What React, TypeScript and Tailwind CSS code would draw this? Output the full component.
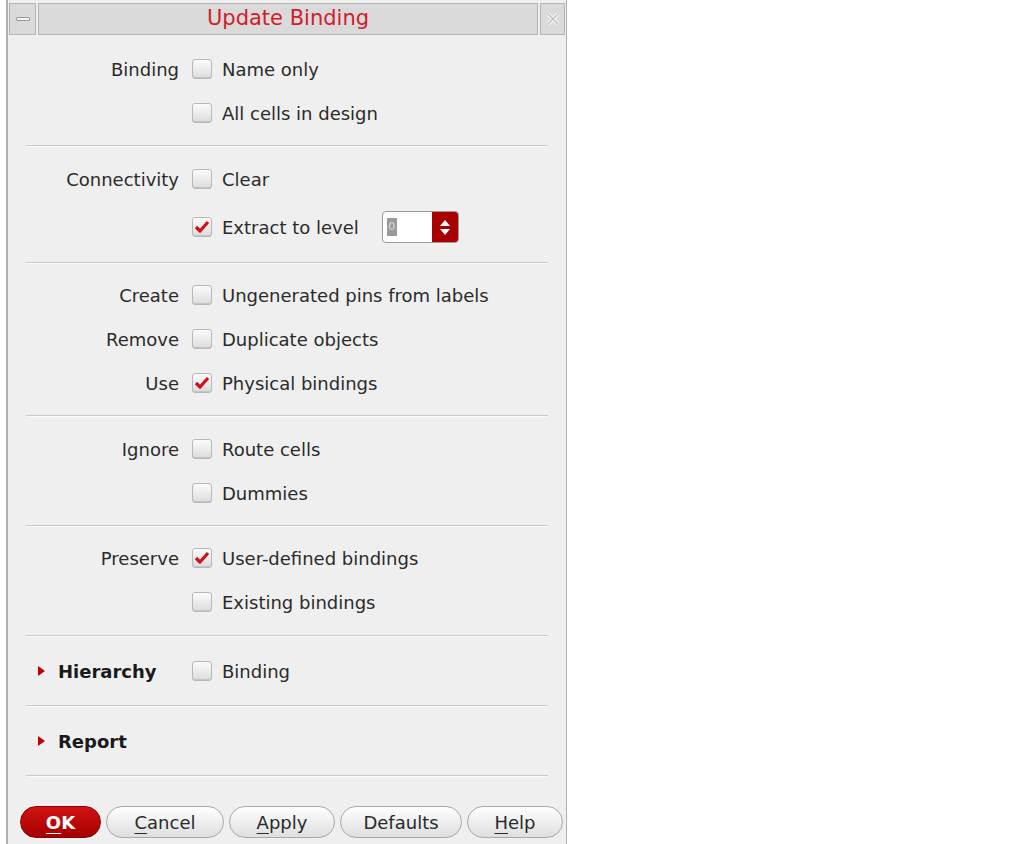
import React from "react";

const font = { fontFamily: '"DejaVu Sans", "Noto Sans", sans-serif' };

function Check({ checked }: { checked?: boolean }) {
  return (
    <span className="relative flex h-[20px] w-[20px] shrink-0 items-center justify-center rounded-[3px] border border-[#b8b8b8] bg-gradient-to-b from-[#fbfbfb] to-[#dcdcdc] shadow-[inset_0_-1px_0_#c4c4c4]">
      {checked && (
        <svg width="16" height="14" viewBox="0 0 16 14">
          <path d="M2 7 L6 11 L14 2" stroke="#d0111b" strokeWidth="3.2" fill="none" strokeLinejoin="round" />
        </svg>
      )}
    </span>
  );
}

function Row({ label, text, checked }: { label?: string; text: string; checked?: boolean }) {
  return (
    <div className="flex h-[44px] items-center">
      <div className="w-[184px] pr-[13px] text-right">{label}</div>
      <Check checked={checked} />
      <span className="ml-[10px]">{text}</span>
    </div>
  );
}

function Sep() {
  return <div className="mx-[18px] h-[2px] border-b border-[#fafafa] bg-[#c9c9c9]" />;
}

function Btn({ children, primary, w }: { children: React.ReactNode; primary?: boolean; w: string }) {
  return (
    <button
      className={`${w} h-[32px] rounded-full border text-[18px] ${
        primary
          ? "border-[#8e0000] bg-gradient-to-b from-[#d21313] to-[#a50000] font-bold text-white"
          : "border-[#a8a8a8] bg-gradient-to-b from-[#ffffff] to-[#dedede] text-[#2a2a2a]"
      }`}
    >
      {children}
    </button>
  );
}

function Arrow() {
  return (
    <svg width="7" height="10" viewBox="0 0 7 10">
      <path d="M0 0 L7 5 L0 10Z" fill="#c00000" />
    </svg>
  );
}

export default function App() {
  return (
    <div className="h-[844px] w-[1017px] bg-white" style={font}>
      <div className="ml-[6px] flex h-[844px] w-[561px] flex-col border-l-2 border-r border-[#b0b0b0] bg-[#efefef] text-[18px] text-[#2b2b2b]">
        {/* title bar */}
        <div className="mt-[3px] flex h-[32px] gap-[2px] px-[1px]">
          <div className="flex w-[27px] items-center justify-center border border-[#b4b4b4] bg-[#dadada]">
            <span className="h-[4px] w-[14px] rounded-[1px] border border-[#999] bg-[#f4f4f4]" />
          </div>
          <div className="flex flex-1 items-center justify-center border border-[#b4b4b4] bg-[#dadada] text-[21px] text-[#d0202a]">
            Update Binding
          </div>
          <div className="flex w-[25px] items-center justify-center border border-[#b4b4b4] bg-[#dadada]">
            <svg width="14" height="14" viewBox="0 0 14 14">
              <path d="M2 2 L12 12 M12 2 L2 12" stroke="#f2f2f2" strokeWidth="4" />
              <path d="M2 2 L12 12 M12 2 L2 12" stroke="#c2c2c2" strokeWidth="1.5" />
            </svg>
          </div>
        </div>

        <div className="pb-[10px] pt-[12px]">
          <Row label="Binding" text="Name only" />
          <Row text="All cells in design" />
        </div>
        <Sep />
        <div className="pb-[9px] pt-[10px]">
          <Row label="Connectivity" text="Clear" />
          <div className="flex h-[52px] items-center">
            <div className="w-[184px]" />
            <Check checked />
            <span className="ml-[10px]">Extract to level</span>
            <div className="ml-[23px] flex h-[32px] w-[77px] overflow-hidden rounded-[4px] border border-[#9a9a9a] bg-white">
              <div className="ml-[4px] mt-[6px] flex h-[18px] w-[10px] items-center justify-center bg-[#9a9a9a] text-[11px] text-[#ddd]">0</div>
              <div className="flex-1" />
              <div className="flex w-[26px] flex-col items-center justify-center gap-[3px] bg-[#a80000]">
                <svg width="10" height="6" viewBox="0 0 10 6"><path d="M0 6 L5 0 L10 6Z" fill="#fff" /></svg>
                <svg width="10" height="6" viewBox="0 0 10 6"><path d="M0 0 L5 6 L10 0Z" fill="#fff" /></svg>
              </div>
            </div>
          </div>
        </div>
        <Sep />
        <div className="pb-[10px] pt-[9px]">
          <Row label="Create" text="Ungenerated pins from labels" />
          <Row label="Remove" text="Duplicate objects" />
          <Row label="Use" text="Physical bindings" checked />
        </div>
        <Sep />
        <div className="pb-[10px] pt-[10px]">
          <Row label="Ignore" text="Route cells" />
          <Row text="Dummies" />
        </div>
        <Sep />
        <div className="pb-[11px] pt-[9px]">
          <Row label="Preserve" text="User-defined bindings" checked />
          <Row text="Existing bindings" />
        </div>
        <Sep />
        <div className="flex h-[68px] items-center">
          <div className="flex w-[184px] items-center pl-[30px]">
            <Arrow />
            <span className="ml-[13px] font-bold text-[#1a1a1a]">Hierarchy</span>
          </div>
          <Check />
          <span className="ml-[10px]">Binding</span>
        </div>
        <Sep />
        <div className="flex h-[68px] items-center pl-[30px]">
          <Arrow />
          <span className="ml-[13px] font-bold text-[#1a1a1a]">Report</span>
        </div>
        <Sep />
        <div className="mt-[29px] flex items-center gap-[5px] pl-[12px]">
          <Btn primary w="w-[81px]"><span className="underline underline-offset-4">O</span>K</Btn>
          <Btn w="w-[118px]"><span className="underline underline-offset-4">C</span>ancel</Btn>
          <Btn w="w-[106px]"><span className="underline underline-offset-4">A</span>pply</Btn>
          <Btn w="w-[122px]">Defaults</Btn>
          <Btn w="w-[96px]"><span className="underline underline-offset-4">H</span>elp</Btn>
        </div>
      </div>
    </div>
  );
}
